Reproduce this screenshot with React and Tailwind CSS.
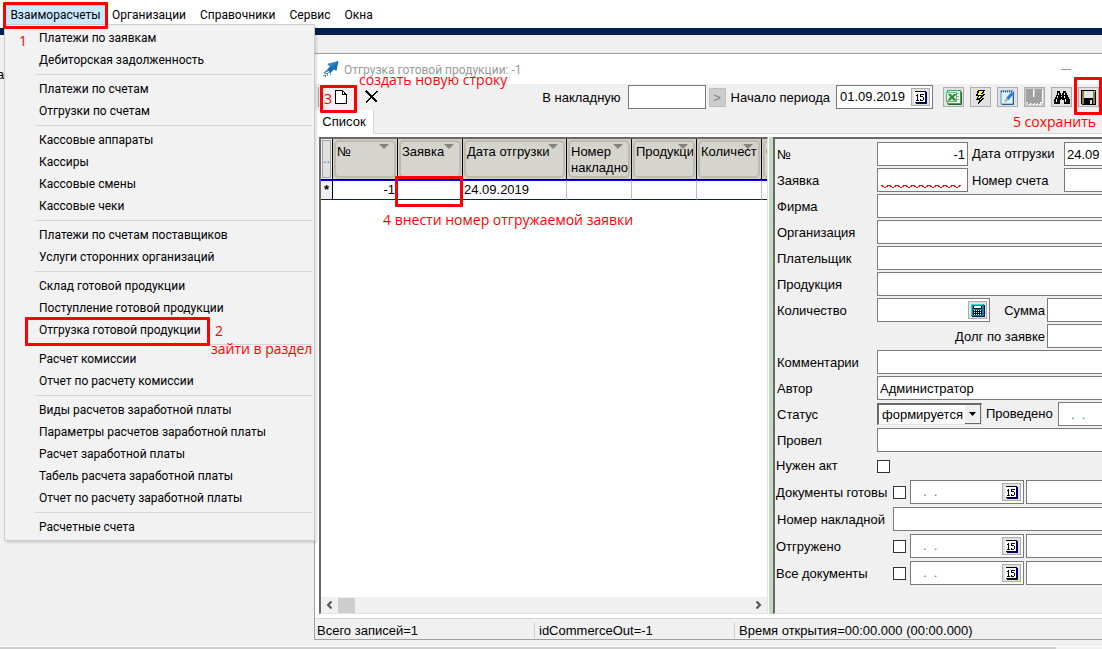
import React, { useState } from 'react';

const menuGroups = [
  ['Платежи по заявкам', 'Дебиторская задолженность'],
  ['Платежи по счетам', 'Отгрузки по счетам'],
  ['Кассовые аппараты', 'Кассиры', 'Кассовые смены', 'Кассовые чеки'],
  ['Платежи по счетам поставщиков', 'Услуги сторонних организаций'],
  ['Склад готовой продукции', 'Поступление готовой продукции', 'Отгрузка готовой продукции'],
  ['Расчет комиссии', 'Отчет по расчету комиссии'],
  [
    'Виды расчетов заработной платы',
    'Параметры расчетов заработной платы',
    'Расчет заработной платы',
    'Табель расчета заработной платы',
    'Отчет по расчету заработной платы',
  ],
  ['Расчетные счета'],
];

const columns = ['№', 'Заявка', 'Дата отгрузки', 'Номер накладно', 'Продукци', 'Количест', 'С'];

// Красная рамка поверх элемента
function Mark({ className }) {
  return <span className={`absolute border-[3px] border-[#ff0000] rounded-[1px] pointer-events-none z-20 ${className}`} />;
}

// Красная подпись к шагу
function Note({ className, children }) {
  return (
    <span className={`absolute whitespace-nowrap text-[#ff0000] font-['Open_Sans','Noto_Sans',sans-serif] text-[14px] leading-[18px] pointer-events-none z-20 ${className}`}>
      {children}
    </span>
  );
}

function RocketIcon() {
  return (
    <svg width="18" height="18" viewBox="0 0 18 18" className="shrink-0">
      <path d="M16.500 1 L14.500 11 L12 9.500 L8.500 13 L5 9.500 L8 6.500 L5.500 4 Z" fill="#1c6fb5" />
      <path d="M16.500 1 L9 7 L5.500 4 Z" fill="#2f8bd0" />
      <path d="M4 10h2v2H4zM2 12h2v2H2zM6 12h2v1H6zM1 15h2v1H1zM5 14h1v2H5zM8 13h1v2H8z" fill="#5d9fd2" />
      <path d="M3 11h1v1H3zM4 13h2v1H4zM3 15h1v2H3zM7 11h1v1H7z" fill="#2a78b8" />
    </svg>
  );
}

function CalendarIcon() {
  return (
    <svg width="13" height="13" viewBox="0 0 13 13" shapeRendering="crispEdges">
      <path d="M2 1h11v12H2z" fill="#00007b" />
      <path d="M0 0h11v12H0z" fill="#fff" />
      <path d="M1 0h11v1H1zM1 11h11v1H1z" fill="#000" />
      <path d="M3 3h1v6H3zM2 4h1v1H2zM2 9h3v1H2zM6 3h4v1H6zM6 4h1v2H6zM6 5h3v1H6zM9 6h1v3H9zM6 9h3v1H6zM6 8h1v1H6z" fill="#000" />
    </svg>
  );
}

function CalculatorIcon() {
  return (
    <svg width="14" height="13" viewBox="0 0 14 13" shapeRendering="crispEdges">
      <path d="M1 1h13v12H1z" fill="#000070" />
      <path d="M0 0h13v12H0z" fill="#008c8c" />
      <path d="M0 0h12v1H0zM0 0h1v11H0z" fill="#48d0d0" />
      <path d="M2 2h9v3H2zM2 6h9v5H2z" fill="#000050" />
      <path d="M3 2h7v2H3z" fill="#fff" />
      <path d="M3 6h1v1H3zM5 6h1v1H5zM7 6h1v1H7zM9 6h1v1H9zM3 8h1v1H3zM5 8h1v1H5zM7 8h1v1H7zM9 8h1v1H9zM3 10h1v1H3zM5 10h1v1H5zM7 10h1v1H7zM9 10h1v1H9z" fill="#d8ffff" />
    </svg>
  );
}

function ExcelIcon() {
  return (
    <svg width="17" height="17" viewBox="0 0 17 17">
      <rect x="2" y="1" width="14" height="14" fill="#4c9c55" />
      <rect x="3" y="2" width="12" height="12" fill="#f2faf0" />
      <path d="M11 4.500h3M11 7.500h3M11 10.500h3" stroke="#7dbb80" />
      <rect x="1.500" y="3.500" width="10" height="9" fill="#d9eed5" stroke="#6fb274" />
      <path d="M3 5h3l1 2 2-2h3L8.500 8l3 3.500h-3L7 9.500 5 11.500H2.500L5.500 8z" fill="#2a8238" />
      <path d="M3 15.500h13.500V3" fill="none" stroke="#1d6b28" />
    </svg>
  );
}

function LightningIcon() {
  return (
    <svg width="17" height="17" viewBox="0 0 17 17" shapeRendering="crispEdges">
      <path d="M6 1h7l-2 4h2l-3 4h2l-6 7 1-5H4l2-4H4z" fill="#000" />
      <path d="M7 2h4L9 5h2l-3 4h2l-2 3V9H6l2-3H6z" fill="#ffff38" />
      <path d="M7 6h3v1H7zM6 9h3v1H6z" fill="#000" />
    </svg>
  );
}

function EditIcon() {
  return (
    <svg width="17" height="17" viewBox="0 0 17 17">
      <rect x="2" y="2" width="12" height="13" fill="#dff1fb" stroke="#5b9cc0" />
      <path d="M2 2.500h12" stroke="#24648f" strokeWidth="2" strokeDasharray="1 1" />
      <path d="M14.500 3v12.500H3" fill="none" stroke="#2d5f80" />
      <path d="M13.500 4 L8 10.500" stroke="#2a7bd0" strokeWidth="3" />
      <path d="M8.500 9.500 L6 13" stroke="#c9b070" strokeWidth="2" />
    </svg>
  );
}

function BookIcon() {
  return (
    <svg width="19" height="18" viewBox="0 0 19 18" shapeRendering="crispEdges">
      <path d="M2 2h7v8h2V2h7v13h-2v2h-2v-2h-1v2h-2v-2h-1v2H8v-2H6v2H4v-2H2z" fill="#fff" />
      <path d="M1 1h7v8h2V1h7v13h-2v2h-2v-1h-1v1h-2v-1H9v1H7v-1H5v1H3v-2H1z" fill="#a0a0a0" />
    </svg>
  );
}

function BinocularsIcon() {
  return (
    <svg width="17" height="17" viewBox="0 0 17 17" shapeRendering="crispEdges">
      <path d="M4 2h3v2h1v2h1V4h1V2h3v2h1v2h1v2h1v2h1v5h-6v-4H9v-1H8v1H7v4H1v-5h1V8h1V6h1z" fill="#000" />
      <path d="M5 4h1v2H5zM4 7h1v2H4zM3 10h1v3H3zM11 4h1v2h-1zM11 7h1v2h-1zM12 10h1v3h-1zM8 7h1v1H8z" fill="#fff" />
    </svg>
  );
}

function SaveIcon() {
  return (
    <svg width="15" height="15" viewBox="0 0 15 15" shapeRendering="crispEdges">
      <path d="M0 0h15v15H1v-1H0z" fill="#000" />
      <path d="M1 1h2v8h9V1h2v13H1z" fill="#84843a" />
      <path d="M3 1h9v7H3z" fill="#e4e4e4" />
      <path d="M3 9h9v5H3z" fill="#000" />
      <path d="M9 10h2v4H9z" fill="#e4e4e4" />
      <path d="M13 1h1v1h-1z" fill="#fff" />
    </svg>
  );
}

function ToolButton({ label, pressed, children }) {
  return (
    <button
      type="button"
      aria-label={label}
      className={`relative w-[21px] h-5 shrink-0 flex items-center justify-center border border-[#adadad] ${pressed ? 'bg-[#cccccc]' : 'bg-[#e1e1e1]'}`}
    >
      {children}
    </button>
  );
}

function TextField({ id, value = '', className = '' }) {
  const [text, setText] = useState(value);
  return (
    <input
      id={id}
      type="text"
      value={text}
      onChange={(e) => setText(e.target.value)}
      className={`h-6 min-w-0 bg-white border border-[#7a7a7a] px-[2px] outline-none ${className}`}
    />
  );
}

// Поле с кнопкой справа (календарь или калькулятор)
function ButtonField({ id, label, value, inputClass = '', className, icon }) {
  const [text, setText] = useState(value);
  return (
    <div className={`h-6 shrink-0 flex items-center bg-white border border-[#7a7a7a] pr-[2px] ${className}`}>
      <input
        id={id}
        type="text"
        aria-label={label}
        value={text}
        onChange={(e) => setText(e.target.value)}
        className={`min-w-0 flex-1 outline-none ${inputClass}`}
      />
      <button type="button" aria-label="Выбрать" className="w-[19px] h-[18px] shrink-0 flex items-center justify-center bg-[#e1e1e1] border border-[#adadad]">
        {icon}
      </button>
    </div>
  );
}

function Row({ label, id, children }) {
  return (
    <div className="flex h-6 items-center">
      <label htmlFor={id} className="w-[101px] shrink-0 whitespace-nowrap pl-px pt-[2px]">{label}</label>
      {children}
    </div>
  );
}

function CheckRow({ label, id }) {
  return (
    <div className="flex h-6 items-center">
      <label htmlFor={id} className="w-[117px] shrink-0 whitespace-nowrap pt-[2px]">{label}</label>
      <input id={id} type="checkbox" className="appearance-none size-[13px] shrink-0 bg-white border border-[#333333] checked:bg-[#333333]" />
      <ButtonField label={`${label}: дата`} value=".  ." inputClass="pl-3 text-[#2a7fb8]" className="ml-1 w-[114px]" icon={<CalendarIcon />} />
      <input type="text" aria-label={`${label}: автор`} className="ml-[2px] h-6 min-w-0 flex-1 bg-white border border-r-0 border-[#7a7a7a] outline-none" />
    </div>
  );
}

function MenuBar() {
  return (
    <nav className="relative z-30 flex h-7 items-start bg-white pl-[5px] pt-[5px] font-['Roboto','Noto_Sans',sans-serif] text-[12px]">
      <div className="relative">
        <button type="button" className="h-5 w-[101px] bg-[#cce8ff] border border-[#99d1ff]">Взаиморасчеты</button>
        <Mark className="-left-[2px] -top-[3px] w-[105px] h-[27px]" />
        <ul className="absolute -left-px top-[19px] w-[311px] bg-[#f2f2f2] border border-[#cccccc] py-[2px] shadow-[2px_2px_2px_rgba(0,0,0,0.12)]">
          {menuGroups.map((group, i) => (
            <li key={group[0]}>
              {i > 0 && <hr className="ml-[30px] mr-[2px] my-[3px] border-[#d7d7d7]" />}
              <ul>
                {group.map((item) => (
                  <li key={item} className="relative flex h-[22px]">
                    <button type="button" className="flex-1 pl-[34px] text-left leading-[22px]">{item}</button>
                    {item === 'Отгрузка готовой продукции' && (
                      <>
                        <Mark className="left-5 -top-[2px] w-[185px] h-[29px]" />
                        <Note className="left-[210px] top-[3px]">2</Note>
                        <Note className="left-[206px] top-[21px]">зайти в раздел</Note>
                      </>
                    )}
                  </li>
                ))}
              </ul>
            </li>
          ))}
          <Note className="left-[14px] top-[7px]">1</Note>
        </ul>
      </div>
      <div className="flex h-5 items-center gap-[14px] pl-[6px]">
        <button type="button">Организации</button>
        <button type="button">Справочники</button>
        <button type="button">Сервис</button>
        <button type="button">Окна</button>
      </div>
    </nav>
  );
}

function Toolbar() {
  return (
    <div className="flex h-[26px] items-center justify-between pl-[3px] pr-[3px]">
      <div className="relative flex items-center">
        <span className="h-5 w-px bg-[#a0a0a0]" />
        <button type="button" aria-label="Создать" className="ml-4">
          <svg width="12" height="14" viewBox="0 0 12 14" shapeRendering="crispEdges">
            <path d="M0.500 0.500h7l3.500 4v9H0.500z" fill="#fff" stroke="#000" />
            <path d="M7.500 0.500v4h3.500" fill="none" stroke="#000" />
          </svg>
        </button>
        <button type="button" aria-label="Удалить" className="ml-[18px]">
          <svg width="14" height="14" viewBox="0 0 14 14" shapeRendering="crispEdges">
            <path d="M1 1 L12 12" stroke="#000" strokeWidth="2" />
            <path d="M12.500 1 L1 12.500" stroke="#000" strokeWidth="1.500" />
          </svg>
        </button>
        <Mark className="left-[2px] -top-[2px] w-[37px] h-[28px]" />
        <Note className="left-[6px] top-[3px]">3</Note>
        <Note className="left-[41px] -top-[16px]">создать новую строку</Note>
      </div>
      <div className="flex items-center">
        <label htmlFor="invoice" className="pt-[2px]">В накладную</label>
        <TextField id="invoice" className="ml-[7px] w-[78px]" />
        <button type="button" disabled className="ml-[3px] w-[17px] h-[19px] bg-[#cccccc] border border-[#bfbfbf] text-[#838383] leading-none">&gt;</button>
        <label htmlFor="period" className="ml-[5px] pt-[2px]">Начало периода</label>
        <ButtonField id="period" value="01.09.2019" inputClass="pl-[3px]" className="ml-[6px] w-[97px]" icon={<CalendarIcon />} />
        <div className="relative ml-[10px] flex gap-[6px]">
          <ToolButton label="Excel"><ExcelIcon /></ToolButton>
          <ToolButton label="Выполнить"><LightningIcon /></ToolButton>
          <ToolButton label="Изменить"><EditIcon /></ToolButton>
          <ToolButton label="Справочник" pressed><BookIcon /></ToolButton>
          <ToolButton label="Найти"><BinocularsIcon /></ToolButton>
          <ToolButton label="Сохранить"><SaveIcon /></ToolButton>
          <Mark className="-right-[3px] -top-[10px] w-7 h-[38px]" />
          <Note className="right-[3px] top-[26px]">5 сохранить</Note>
        </div>
      </div>
    </div>
  );
}

function ShipmentTable() {
  return (
    <div className="relative flex w-[449px] shrink-0 flex-col overflow-hidden bg-white border-t-2 border-l-2 border-r border-b border-t-[#696969] border-l-[#696969] border-r-[#e3e3e3] border-b-[#e3e3e3]">
      <table className="w-[510px] table-fixed border-separate border-spacing-0">
        <colgroup>
          <col className="w-[12px]" />
          <col className="w-[65px]" />
          <col className="w-[65px]" />
          <col className="w-[104px]" />
          <col className="w-[65px]" />
          <col className="w-[65px]" />
          <col className="w-[65px]" />
          <col className="w-[69px]" />
        </colgroup>
        <thead>
          <tr className="bg-[#d4d0c8]">
            <th className="p-0 border-r border-b border-black bg-[#f0f0f0] align-top text-left font-normal text-[#2a7fb8]">
              <div className="m-px flex h-[38px] items-center justify-center overflow-hidden border border-[#a0a0a0] bg-[#e1e1e1]">..</div>
            </th>
            {columns.map((name) => (
              <th key={name} className="p-0 border-r border-b border-black font-normal text-left align-top">
                <div className="relative m-px h-[38px] overflow-hidden rounded-[5px] border-2 border-[#bdbbb0] bg-[#d6d5cd] pl-px pt-[2px] leading-[16px]">
                  <svg width="10" height="5" viewBox="0 0 10 5" className="absolute right-[5px] top-[2px]">
                    <path d="M0 0h10L5 5z" fill="#84847c" />
                  </svg>
                  <span className="relative">{name}</span>
                </div>
              </th>
            ))}
          </tr>
        </thead>
        <tbody>
          <tr className="h-5 [&>td]:border-y [&>td]:border-y-[#0000ff]">
            <td className="p-0 border-r border-r-black bg-[#f0f0f0] text-center font-bold leading-4">*</td>
            <td className="p-0 pr-[2px] text-right border-r border-r-[#c0c0c0]">-1</td>
            <td className="border-r border-r-[#c0c0c0]" />
            <td className="p-0 pl-px border-r border-r-[#c0c0c0]">24.09.2019</td>
            <td className="border-r border-r-[#c0c0c0]" />
            <td className="border-r border-r-[#c0c0c0]" />
            <td className="border-r border-r-[#c0c0c0]" />
            <td />
          </tr>
        </tbody>
      </table>
      <Mark className="left-[74px] top-[37px] w-[68px] h-[31px]" />
      <Note className="left-[62px] top-[72px]">4 внести номер отгружаемой заявки</Note>
      <div className="mt-auto flex h-4 items-center bg-[#f0f0f0]">
        <button type="button" aria-label="Влево" className="flex h-4 w-[17px] items-center justify-center">
          <svg width="7" height="8" viewBox="0 0 7 8"><path d="M5.500 0.500L2 4l3.500 3.500" fill="none" stroke="#505050" strokeWidth="2" /></svg>
        </button>
        <span className="h-[15px] w-[17px] bg-[#cdcdcd]" />
        <button type="button" aria-label="Вправо" className="ml-auto flex h-4 w-[17px] items-center justify-center">
          <svg width="7" height="8" viewBox="0 0 7 8"><path d="M1.500 0.500L5 4l-3.500 3.500" fill="none" stroke="#505050" strokeWidth="2" /></svg>
        </button>
      </div>
    </div>
  );
}

function ShipmentForm() {
  return (
    <form className="min-w-0 flex-1 overflow-hidden bg-[#f0f0f0] border-t-2 border-l-2 border-b border-t-[#696969] border-l-[#696969] border-b-[#e3e3e3] pl-px pt-[3px]">
      <div className="flex flex-col gap-[2px]">
        <Row label="№" id="num">
          <TextField id="num" value="-1" className="w-[91px] shrink-0 text-right" />
          <label htmlFor="shipDate" className="ml-1 w-[92px] shrink-0">Дата отгрузки</label>
          <TextField id="shipDate" value="24.09.2019" className="flex-1 border-r-0" />
        </Row>
        <Row label="Заявка" id="order">
          <div className="relative flex shrink-0">
            <TextField id="order" className="w-[91px]" />
            <svg width="80" height="4" viewBox="0 0 80 4" className="absolute left-1 top-4" shapeRendering="crispEdges">
              <path
                d="M0 1l3 2h2l3-2 3 2h2l3-2 3 2h2l3-2 3 2h2l3-2 3 2h2l3-2 3 2h2l3-2 3 2h2l3-2 3 2h2l3-2 3 2h2l3-2 3 2h2l3-2"
                fill="none"
                stroke="#ff0000"
              />
            </svg>
          </div>
          <label htmlFor="bill" className="ml-1 w-[92px] shrink-0 pt-[2px]">Номер счета</label>
          <TextField id="bill" className="flex-1 border-r-0" />
        </Row>
        <Row label="Фирма" id="firm"><TextField id="firm" className="flex-1 border-r-0" /></Row>
        <Row label="Организация" id="org"><TextField id="org" className="flex-1 border-r-0" /></Row>
        <Row label="Плательщик" id="payer"><TextField id="payer" className="flex-1 border-r-0" /></Row>
        <Row label="Продукция" id="product"><TextField id="product" className="flex-1 border-r-0" /></Row>
        <Row label="Количество" id="qty">
          <ButtonField id="qty" value="" className="w-[113px]" icon={<CalculatorIcon />} />
          <label htmlFor="sum" className="w-[57px] shrink-0 pr-[2px] pt-[2px] text-right">Сумма</label>
          <TextField id="sum" className="flex-1 border-r-0" />
        </Row>
        <div className="flex h-6 items-center">
          <label htmlFor="debt" className="w-[271px] shrink-0 pr-[2px] pt-[2px] text-right">Долг по заявке</label>
          <TextField id="debt" className="flex-1 border-r-0" />
        </div>
        <Row label="Комментарии" id="comment"><TextField id="comment" className="flex-1 border-r-0" /></Row>
        <Row label="Автор" id="author"><TextField id="author" value="Администратор" className="flex-1 border-r-0" /></Row>
        <Row label="Статус" id="status">
          <div className="relative flex shrink-0">
            <select
              id="status"
              className="appearance-none w-[105px] h-[22px] bg-white border-t-2 border-l-2 border-r border-b border-t-[#696969] border-l-[#696969] border-r-[#e3e3e3] border-b-[#e3e3e3] pl-[3px] outline-none"
            >
              <option>формируется</option>
            </select>
            <span className="absolute right-px top-[2px] flex h-[19px] w-4 items-center justify-center bg-[#f0f0f0] border-r border-b border-[#696969] pointer-events-none">
              <svg width="7" height="4" viewBox="0 0 7 4"><path d="M0 0h7L3.500 4z" fill="#000" /></svg>
            </span>
          </div>
          <label htmlFor="posted" className="ml-1 w-[72px] shrink-0">Проведено</label>
          <TextField id="posted" value=".  ." className="flex-1 border-r-0 pl-3 text-[#2a7fb8]" />
        </Row>
        <Row label="Провел" id="postedBy"><TextField id="postedBy" className="flex-1 border-r-0" /></Row>
        <div className="flex h-6 items-center">
          <label htmlFor="act" className="w-[101px] shrink-0 whitespace-nowrap">Нужен акт</label>
          <input id="act" type="checkbox" className="appearance-none size-[13px] bg-white border border-[#333333] checked:bg-[#333333]" />
        </div>
      </div>
      <div className="mt-[2px] flex flex-col gap-[3px]">
        <CheckRow label="Документы готовы" id="docsReady" />
        <div className="flex h-6 items-center">
          <label htmlFor="invoiceNo" className="w-[117px] shrink-0 whitespace-nowrap pl-px pt-[2px]">Номер накладной</label>
          <TextField id="invoiceNo" className="flex-1 border-r-0" />
        </div>
        <CheckRow label="Отгружено" id="shipped" />
        <CheckRow label="Все документы" id="allDocs" />
      </div>
    </form>
  );
}

function ShipmentWindow() {
  return (
    <section className="flex min-w-0 flex-1 flex-col border-t border-l border-b border-[#a0a0a0] bg-[#f0f0f0]">
      <header className="flex h-[30px] items-center bg-white pl-[7px] pr-[31px]">
        <RocketIcon />
        <h1 className="ml-1 flex-1 pt-px font-['Roboto','Noto_Sans',sans-serif] text-[12px] text-[#999999]">Отгрузка готовой продукции: -1</h1>
        <button type="button" aria-label="Свернуть" className="flex h-4 w-[10px] items-center"><span className="h-px w-full bg-[#999999]" /></button>
      </header>
      <Toolbar />
      <div className="flex h-6">
        <button type="button" className="w-[59px] bg-white border-r border-[#d9d9d9]">Список</button>
        <div className="flex-1 border-b border-[#d9d9d9]" />
      </div>
      <div className="flex min-h-0 flex-1 bg-white pl-1 pt-[3px] pb-1">
        <ShipmentTable />
        <div className="ml-px w-[4px] shrink-0 bg-[#c0dcc0]" />
        <ShipmentForm />
      </div>
      <footer className="flex h-[21px] items-center border-t border-[#d7d7d7] pt-[3px]">
        <span className="w-[219px] pl-[2px]">Всего записей=1</span>
        <span className="w-[200px] border-l border-[#d0d0d0] pl-1">idCommerceOut=-1</span>
        <span className="flex-1 border-l border-[#d0d0d0] pl-1">Время открытия=00:00.000 (00:00.000)</span>
      </footer>
    </section>
  );
}

function App() {
  return (
    <div className="flex min-h-screen flex-col overflow-hidden bg-[#f0f0f0] font-['Liberation_Sans',Arial,sans-serif] text-[13px] leading-4 text-black">
      <MenuBar />
      <div className="h-[7px] bg-[#00204a]" />
      <main className="flex flex-1 pt-[18px] pb-[6px]">
        <aside className="w-[314px] shrink-0 overflow-hidden pt-[14px]">
          <span className="-ml-[3px]">а</span>
        </aside>
        <ShipmentWindow />
      </main>
      <div className="flex h-[3px] border-t border-white">
        <span className="w-[1056px] bg-[#cdcdcd]" />
      </div>
    </div>
  );
}

export default App;
